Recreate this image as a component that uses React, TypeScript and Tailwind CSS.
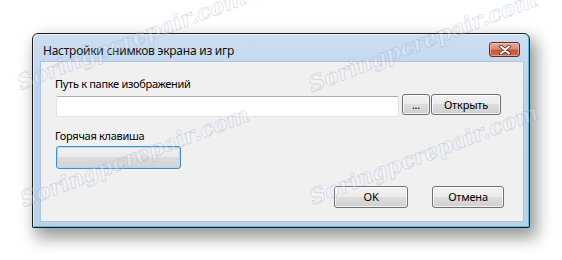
import React from "react";

const ui = { fontFamily: '"Noto Sans", "Open Sans", Arial, sans-serif' };

function Btn({ children, className = "" }: { children: React.ReactNode; className?: string }) {
  return (
    <div
      className={
        "flex items-center justify-center rounded-[3px] border border-[#707070] bg-[linear-gradient(to_bottom,#f2f2f2_0%,#ebebeb_50%,#dddddd_50%,#cfcfcf_100%)] text-[11px] leading-4 tracking-[-0.2px] text-black shadow-[inset_0_0_0_1px_rgba(255,255,255,0.75)] " +
        className
      }
    >
      {children}
    </div>
  );
}

function Watermark({ className }: { className: string }) {
  return (
    <span
      className={
        "pointer-events-none absolute origin-bottom-left -rotate-[21deg] whitespace-nowrap text-[22px] font-bold italic leading-[22px] text-[rgba(255,255,255,0.35)] opacity-70 [-webkit-text-stroke:0.6px_rgba(120,140,190,0.5)] " +
        className
      }
      style={{ fontFamily: '"DejaVu Serif", "Liberation Serif", serif' }}
    >
      Soringpcrepair.com
    </span>
  );
}

export default function App() {
  return (
    <div className="relative h-[260px] w-[562px] overflow-hidden bg-white pl-[32px] pt-[33px]" style={ui}>
      {/* window */}
      <div className="flex h-[195px] w-[498px] flex-col rounded-t-[6px] rounded-b-[1px] border border-[#1c1c1c] bg-[linear-gradient(to_bottom,#cddef1_0%,#bcd3eb_30%,#b9d1ea_100%)] shadow-[5px_8px_16px_2px_rgba(0,0,0,0.4),inset_1px_1px_0_rgba(255,255,255,0.6),inset_-1px_-1px_0_#4cc3e4]">
        {/* title bar */}
        <div className="flex h-[27px] items-start justify-between pl-[10px] pr-[9px] pt-[8px]">
          <span className="mt-[1px] text-[12px] leading-4 tracking-[-0.25px] text-[#111]">Настройки снимков экрана из игр</span>
          <div className="flex h-[15px] w-[31px] items-center justify-center rounded-[3px] border border-[#6b2a20] bg-[linear-gradient(to_bottom,#e7aa9c_0%,#d98b78_45%,#c8553c_55%,#cf6a4f_100%)] shadow-[inset_0_0_0_1px_rgba(255,220,210,0.45)]">
            <svg width="12" height="10" viewBox="0 0 12 10">
              <path d="M2 1.5 L10 8.5 M10 1.5 L2 8.5" stroke="#4a2a24" strokeWidth="3.6" strokeLinecap="round" />
              <path d="M2 1.5 L10 8.5 M10 1.5 L2 8.5" stroke="#ffffff" strokeWidth="2" strokeLinecap="round" />
            </svg>
          </div>
        </div>
        {/* client area */}
        <div className="ml-[7px] flex h-[161px] w-[484px] flex-col border border-[#aec4dc] bg-[#f0f0f0] pl-[14px] pt-[14px]">
          <div className="h-4 text-[11px] leading-4 tracking-[-0.3px] text-black">Путь к папке изображений</div>
          <div className="mt-[2px] flex items-start pl-[1px]">
            <div className="mt-[2px] h-[21px] w-[343px] rounded-[2px] border border-[#e2e3ea] border-t-[#abadb3] bg-white" />
            <Btn className="ml-[3px] h-[21px] w-[28px]">...</Btn>
            <Btn className="ml-[1px] h-[21px] w-[70px]">Открыть</Btn>
          </div>
          <div className="mt-[11px] h-4 text-[11px] leading-4 tracking-[-0.3px] text-black">Горячая клавиша</div>
          <div className="ml-[1px] mt-[2px] h-[23px] w-[125px] rounded-[3px] border border-[#3d8fd1] bg-[linear-gradient(to_bottom,#f1f1f1_0%,#e9e9e9_50%,#dcdcdc_50%,#d2d2d2_100%)] shadow-[inset_0_0_0_1px_rgba(170,215,245,0.9)]" />
          <div className="mt-[17px] flex justify-end gap-[24px] pr-[19px]">
            <Btn className="h-[22px] w-[74px]">OK</Btn>
            <Btn className="h-[22px] w-[72px]">Отмена</Btn>
          </div>
        </div>
      </div>

      <Watermark className="left-[22px] top-[71px]" />
      <Watermark className="left-[313px] top-[73px]" />
      <Watermark className="left-[25px] top-[188px]" />
      <Watermark className="left-[314px] top-[186px]" />
    </div>
  );
}
